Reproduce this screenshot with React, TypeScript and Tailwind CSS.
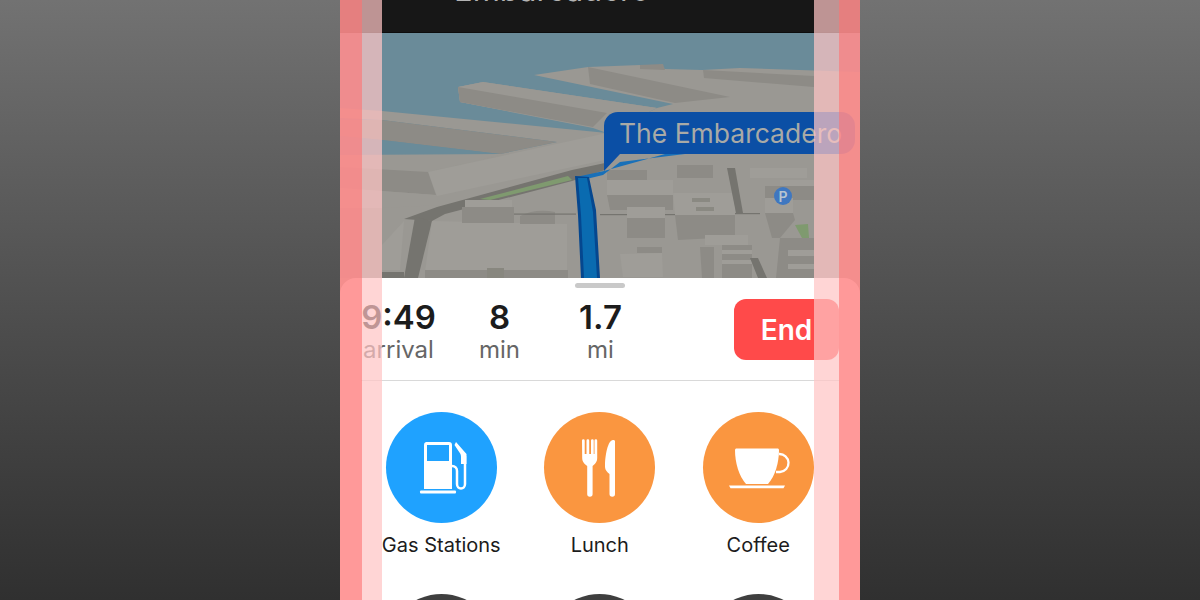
const stats = [
  { value: "9:49", label: "arrival" },
  { value: "8", label: "min" },
  { value: "1.7", label: "mi" },
];

function GasIcon() {
  return (
    <svg viewBox="0 0 111 111" className="w-full h-full">
      <path d="M40 30h23a3 3 0 0 1 3 3v44H38V33a3 3 0 0 1 2-3z" fill="#fff" />
      <rect x="41" y="33" width="22" height="16" fill="#1fa2ff" />
      <rect x="34" y="78.500" width="36" height="3" rx="1" fill="#fff" />
      <path d="M66 54c3 0 5 2 5 5v13c0 3 2 4.500 4 4.500s4-1.500 4-4.500V44" fill="none" stroke="#fff" strokeWidth="2.500" />
      <path d="M70 30l10.500 12v10l-5.500 0v-7c0-2-.5-3-1.500-4.500L68.500 33z" fill="#fff" />
    </svg>
  );
}

function LunchIcon() {
  return (
    <svg viewBox="0 0 111 111" className="w-full h-full">
      <path d="M38 28.500a1.300 1.300 0 0 1 2.700 0V42h1.800V28.500a1.300 1.300 0 0 1 2.700 0V42H47V28.500a1.300 1.300 0 0 1 2.700 0V42h.8V28.500a1.300 1.300 0 0 1 2.700 0V46c0 4-2.300 6-4.600 8v28a2.700 2.700 0 0 1-5.400 0V54c-2.500-2-5-4-5-8z" fill="#fff" />
      <path d="M71 29v53a2.700 2.700 0 0 1-5.500 0V62c-2-1.500-4.500-4-4.500-7 0-12 3-27 8-27 1 0 2 .5 2 1z" fill="#fff" />
    </svg>
  );
}

function CoffeeIcon() {
  return (
    <svg viewBox="0 0 111 111" className="w-full h-full">
      <path d="M32 38c0-.8.7-1.500 1.500-1.500h41c.8 0 1.500.7 1.500 1.500 0 13-4 26-11 34H43c-7-8-11-21-11-34z" fill="#fff" />
      <path d="M76 42a9 9 0 0 1 1 18h-4" fill="none" stroke="#fff" strokeWidth="2.300" />
      <path d="M26 73.500h56l-1.500 2.700h-53z" fill="#fff" />
    </svg>
  );
}

// the map is one drawing, traced from the reference
function MapDrawing() {
  const top = "#9a9893";
  const wall = "#8d8b86";
  const face = "#9f9d98";
  const road = "#75746f";
  return (
    <svg viewBox="0 33 520 262" preserveAspectRatio="none" className="w-full h-full block">
      <rect x="0" y="33" width="520" height="262" fill="#6a8b99" />
      {/* piers */}
      <path d="M194 75L248 67L300 65L325 69L362 70L400 68L520 72V300H0V155L160 154L217 142L42 120L0 118V108L42 111L267 133L317 108L143 82L118 87L120 102L253 127L267 113L317 108L333 104z" fill={top} />
      <path d="M143 82L118 87L120 102L253 128L267 133L317 108z" fill={top} />
      <path d="M118 87L120 102L253 127L267 113L170 96z" fill={wall} />
      <path d="M248 67L250 84L335 103L390 97z" fill={wall} />
      <path d="M300 65L323 64L325 70L300 69z" fill={wall} />
      <path d="M363 70L364 78L474 87V76z" fill={wall} />
      <path d="M42 120H0V136L42 140L160 154L217 142z" fill={wall} />
      <path d="M0 136L42 140L160 154H0z" fill="#6a8b99" />
      <path d="M0 155H160L88 172L0 168z" fill={top} />
      {/* long block */}
      <path d="M88 172L267 133L265 160L97 196z" fill={face} />
      <path d="M0 167L88 172L96 195L0 188z" fill={wall} />
      <path d="M0 188L96 195L100 205L0 210z" fill={top} />
      {/* street */}
      <path d="M64 219L97 207L232 170L265 163V170L232 181L105 214L92 221z" fill={road} />
      <path d="M140 199L228 176L232 180L150 200z" fill="#7f9a6f" />
      <path d="M75 217L92 221L78 278H64z" fill={road} />
      <path d="M64 221L42 245V270H60z" fill={face} />
      <path d="M0 208H42V278H0z" fill={wall} />
      <rect x="42" y="272" width="22" height="6" fill={road} />
      {/* centre block */}
      <path d="M92 221L227 224V272H85z" fill={face} />
      <path d="M85 270H228V278H85z" fill={wall} />
      <rect x="147" y="268" width="17" height="10" fill="#88877f" />
      <rect x="125" y="200" width="47" height="7" fill={face} />
      <rect x="122" y="207" width="52" height="16" fill={wall} />
      <path d="M180 216Q196 208 215 212V224H180z" fill={wall} />
      <rect x="174" y="213.500" width="62" height="1.200" fill={road} />
      {/* right of route */}
      <rect x="267" y="170" width="40" height="10" fill={wall} />
      <rect x="337" y="165" width="36" height="13" fill={wall} />
      <rect x="267" y="180" width="66" height="15" fill={face} />
      <path d="M267 195H333V210H270z" fill={wall} />
      <path d="M333 193H395V215H335z" fill={face} />
      <path d="M335 215H395V237L338 240z" fill={wall} />
      <rect x="287" y="207" width="38" height="11" fill={face} />
      <rect x="287" y="218" width="38" height="20" fill={wall} />
      <rect x="260" y="214" width="27" height="1.200" fill={road} />
      <rect x="325" y="214" width="10" height="1.200" fill={road} />
      <rect x="395" y="213" width="25" height="1.200" fill={road} />
      <path d="M387 168L395 168L403 213L396 213z" fill={road} />
      <rect x="352" y="198" width="18" height="4" fill="#8a8982" />
      <rect x="356" y="207" width="18" height="4" fill="#8a8982" />
      <rect x="410" y="168" width="57" height="10" fill={face} />
      <rect x="440" y="180" width="34" height="6" fill={face} />
      <rect x="425" y="186" width="49" height="14" fill={wall} />
      <path d="M425 198H453V213H425z" fill={face} />
      <path d="M425 213H453L455 220L440 238H432z" fill={wall} />
      <path d="M455 225L468 224L469 238H462z" fill="#7f9a6f" />
      <path d="M440 238H474V278H436z" fill={wall} />
      <rect x="448" y="250" width="26" height="6" fill={face} />
      <rect x="448" y="264" width="26" height="5" fill={face} />
      <rect x="365" y="235" width="43" height="10" fill={face} />
      <rect x="382" y="245" width="30" height="33" fill={wall} />
      <rect x="382" y="250" width="30" height="4" fill={face} />
      <rect x="382" y="260" width="30" height="4" fill={face} />
      <path d="M360 247H374V278H362z" fill={wall} />
      <path d="M280 254L322 253L323 277H283z" fill={face} />
      <rect x="297" y="247" width="25" height="6" fill={wall} />
      <path d="M410 258H418L427 278H418z" fill={road} />
      {/* route */}
      <path d="M280 162L345 154H325L264 171L236 177L238 181L263 175z" fill="#1970b8" />
      <path d="M235 176L249 177L256 210L260 278H241L238 215z" fill="#05478f" />
      <path d="M238 178L247 178L253 212L257 278H244L241 215z" fill="#0a6bb0" />
      {/* parking */}
      <circle cx="443" cy="196" r="9" fill="#3f77c0" />
      <text x="443" y="201.500" textAnchor="middle" fontSize="14" fontWeight="600" fill="#b8c4d0" fontFamily="Inter, sans-serif">P</text>
    </svg>
  );
}

export default function App() {
  return (
    <div className="h-[600px] w-full overflow-hidden flex justify-center bg-linear-to-b from-[#727272] to-[#303030] font-['Inter',sans-serif]">
      <div className="relative w-[520px] h-[600px] overflow-hidden">
        <div className="h-[33px] bg-[#171717] overflow-hidden flex items-end pl-[114px] pb-[22px] border-b border-[#0d0d0d]">
          <div className="text-[31px] leading-[40px] text-[#b4b4b4] whitespace-nowrap">Embarcadero</div>
        </div>

        <div className="relative h-[262px]">
          <MapDrawing />
          <div className="absolute left-[264px] top-[79px] w-[251px] h-[42px] bg-[#0b4fa5] rounded-tl-[14px] rounded-r-[14px] text-[#a9aaa6] text-[26.500px] leading-[42px] pl-[15px] whitespace-nowrap">
            The Embarcadero
            <svg viewBox="0 0 16 17" className="absolute left-0 top-[42px] w-[16px] h-[17px]">
              <path d="M0 0H16L0 17z" fill="#0b4fa5" />
            </svg>
          </div>
        </div>

        <div className="relative -mt-[17px] bg-white rounded-t-[16px] pb-[40px]">
          <div className="mx-auto pt-[5px] w-[50px]">
            <div className="h-[5px] rounded-full bg-[#c9c9c9]" />
          </div>
          <div className="flex items-start mt-[11px] pl-[8px] pr-[21px]">
            {stats.map((s) => (
              <div key={s.label} className="w-[101px] flex flex-col items-center">
                <div className="text-[33px] leading-[36px] font-semibold text-[#1c1c1c]">{s.value}</div>
                <div className="text-[24px] leading-[28px] mt-[1px] text-[#666666]">{s.label}</div>
              </div>
            ))}
            <button className="ml-auto w-[105px] h-[61px] rounded-[12px] bg-[#ff4a4a] text-white text-[28px] font-semibold">End</button>
          </div>
          <div className="mx-[21px] mt-[16px] h-px bg-[#d9d9d9]" />
          <div className="grid grid-cols-[158.500px_158.500px_158.500px] pl-[22px] pt-[31px] gap-y-[35px]">
            <Place label="Gas Stations" color="bg-[#1fa2ff]"><GasIcon /></Place>
            <Place label="Lunch" color="bg-[#fa9640]"><LunchIcon /></Place>
            <Place label="Coffee" color="bg-[#fa9640]"><CoffeeIcon /></Place>
            <Place label="" color="bg-[#3f3f3f]" />
            <Place label="" color="bg-[#3f3f3f]" />
            <Place label="" color="bg-[#3f3f3f]" />
          </div>
        </div>

        {/* translucent red guide bands */}
        <div className="absolute inset-y-0 left-0 w-[22px] bg-[rgba(255,140,140,0.89)]" />
        <div className="absolute inset-y-0 left-[22px] w-[20px] bg-[rgba(255,197,197,0.72)]" />
        <div className="absolute inset-y-0 left-[474px] w-[25px] bg-[rgba(255,197,197,0.72)]" />
        <div className="absolute inset-y-0 left-[499px] w-[21px] bg-[rgba(255,140,140,0.89)]" />
      </div>
    </div>
  );
}

function Place({ label, color, children }: { label: string; color: string; children?: React.ReactNode }) {
  return (
    <div className="flex flex-col items-center">
      <div className={`w-[111px] h-[111px] rounded-full ${color}`}>{children}</div>
      <div className="mt-[8px] h-[28px] text-[20px] leading-[28px] text-[#1c1c1c] whitespace-nowrap">{label}</div>
    </div>
  );
}
